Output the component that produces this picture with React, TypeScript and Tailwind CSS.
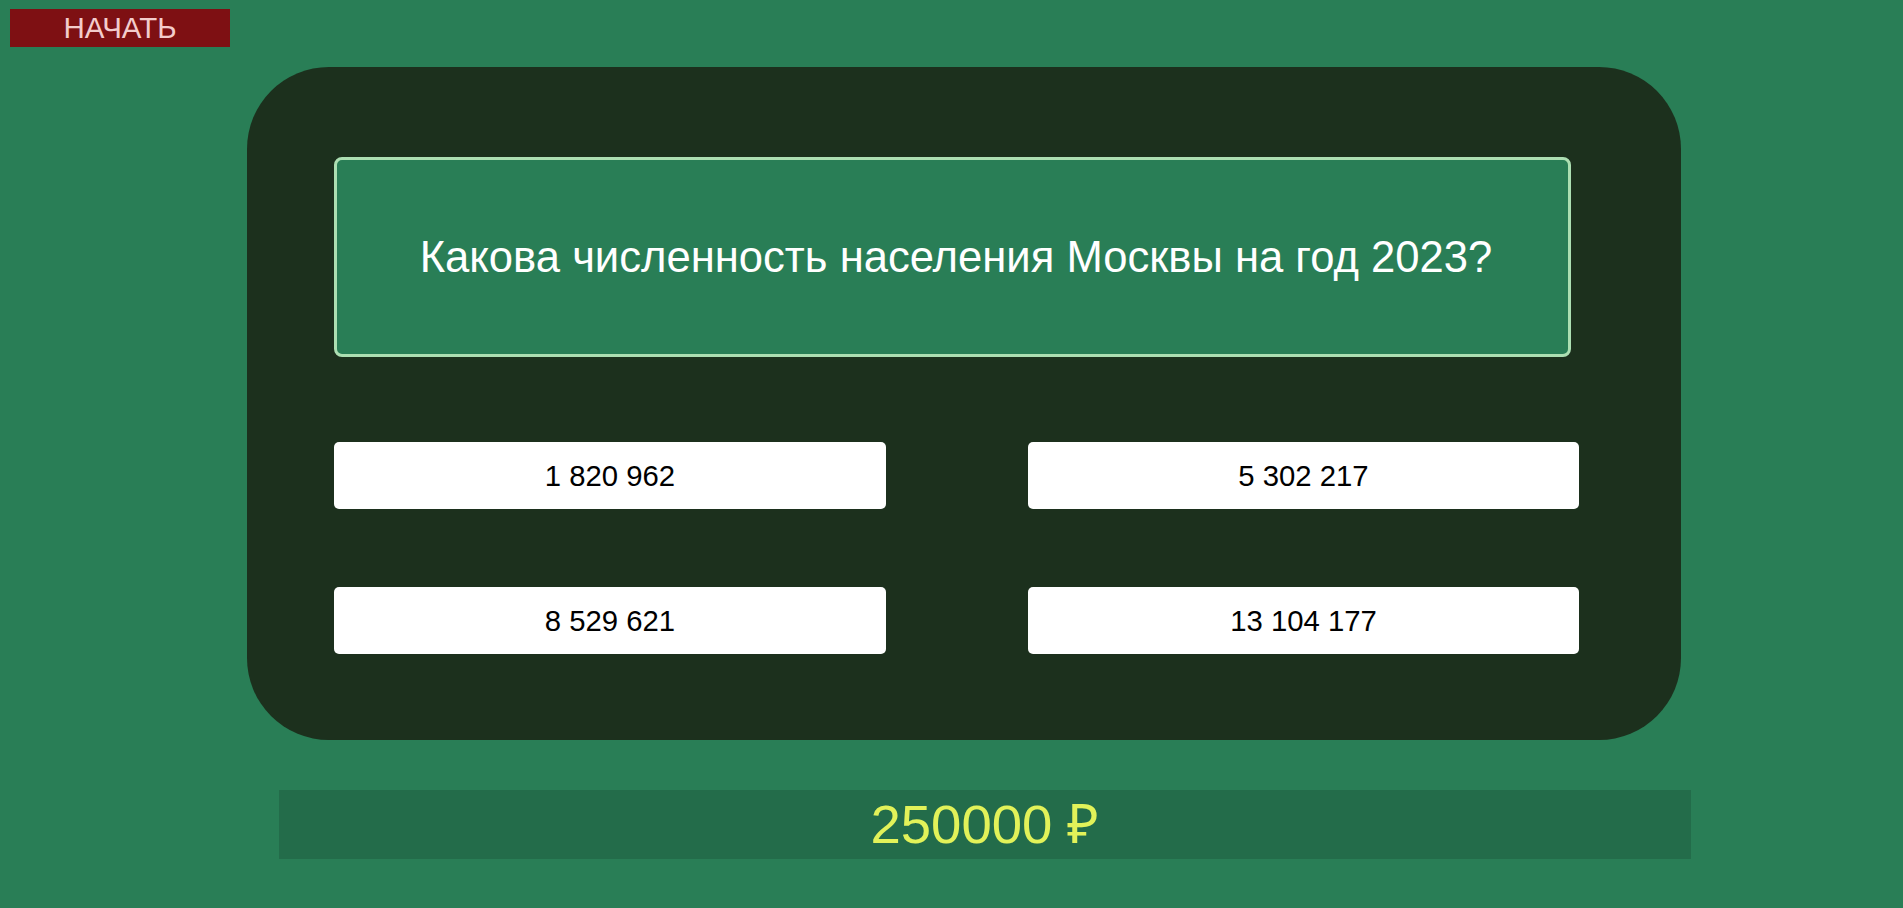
const answers = ['1 820 962', '5 302 217', '8 529 621', '13 104 177']

export default function App() {
  return (
    <div className="min-h-screen w-full overflow-hidden bg-[#297e56] pt-[9px] pb-[40px] font-['Liberation_Sans',Arial,sans-serif]">
      {/* кнопка старта */}
      <button className="ml-[10px] block h-[38px] w-[220px] bg-[#7e1013] text-[29.5px] leading-[38px] text-[#f3cccc]">
        НАЧАТЬ
      </button>

      {/* игровое поле */}
      <div className="ml-[247px] mt-[20px] h-[673px] w-[1434px] rounded-[82px] bg-[#1c301d] pl-[87px] pt-[90px]">
        <div className="flex h-[200px] w-[1237px] items-center justify-center rounded-[8px] border-[3px] border-[#acdfb2] bg-[#297e56] pl-[7px] pt-[2px]">
          <p className="text-[43.6px] text-white">Какова численность населения Москвы на год 2023?</p>
        </div>

        <div className="mt-[85px] grid grid-cols-[552px_551px] gap-x-[142px] gap-y-[78px]">
          {answers.map(a => (
            <button
              key={a}
              className="h-[67px] rounded-[5px] bg-white text-[29.3px] text-black"
            >
              {a}
            </button>
          ))}
        </div>
      </div>

      {/* выигрыш */}
      <div className="ml-[279px] mt-[50px] flex h-[69px] w-[1412px] items-center justify-center bg-[#236c4a]">
        <span className="text-[54.5px] text-[#e2f259]">250000 ₽</span>
      </div>
    </div>
  )
}
